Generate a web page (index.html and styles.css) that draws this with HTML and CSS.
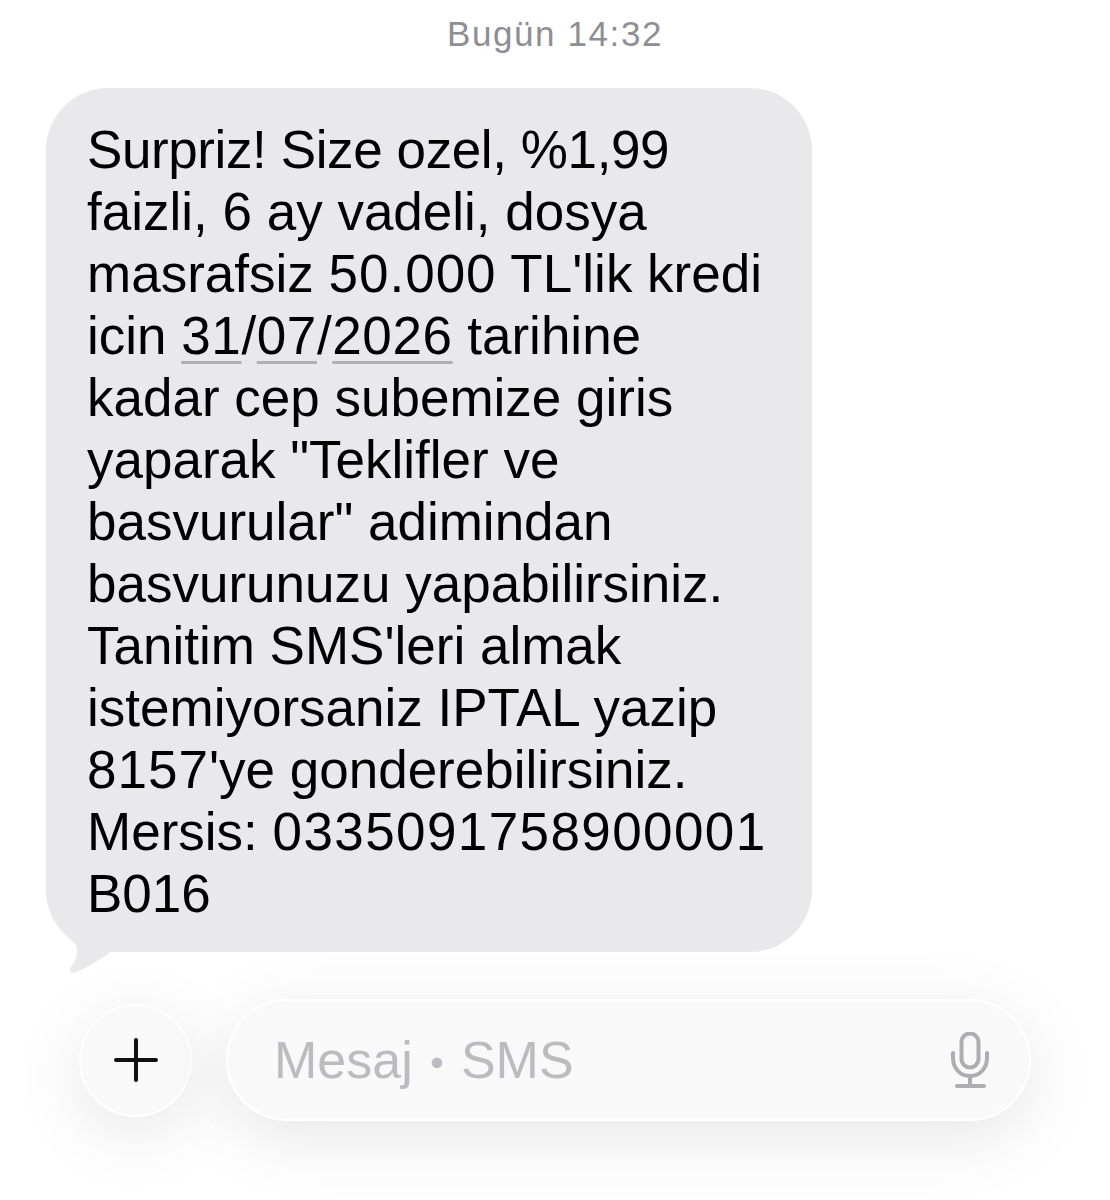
FILE: index.html
```html
<!DOCTYPE html>
<html lang="tr">
<head>
<meta charset="utf-8">
<title>Mesaj</title>
<link rel="stylesheet" href="styles.css">
</head>
<body>
<main class="screen">
  <div class="stamp">Bugün 14:32</div>
  <div class="bubble">
    <p class="text"><span class="tight">Surpriz! Size ozel, %1,99</span><br>faizli, 6 ay vadeli, dosya<br>masrafsiz <span class="num">50.000</span> TL'lik kredi<br>icin <span class="date"><span class="dl">31</span>/<span class="dl">07</span>/<span class="dl">2026</span></span> tarihine<br>kadar cep subemize giris<br>yaparak "Teklifler ve<br>basvurular" adimindan<br>basvurunuzu yapabilirsiniz.<br>Tanitim SMS'leri almak<br>istemiyorsaniz IPTAL yazip<br><span class="num">8157</span>'ye gonderebilirsiniz.<br>Mersis: <span class="code">0335091758900001</span><br>B016</p>
    <svg class="tail" viewBox="0 0 50 46" aria-hidden="true"><path d="M0 0C4 5 9 10 13 14C17 19 16 28 9 37C6 41 9 44 14 42C26 37 36 31 46 24L50 20L50 0Z"/></svg>
  </div>
  <div class="composer">
    <div class="plus">
      <svg viewBox="0 0 44 44" width="44" height="44" aria-hidden="true"><path d="M22 2V42M2 22H42"/></svg>
    </div>
    <div class="field">
      <span class="placeholder">Mesaj <span class="dot">•</span> SMS</span>
      <svg class="mic" viewBox="0 0 38 56" width="38" height="56" aria-hidden="true">
        <rect x="10.500" y="1.500" width="17" height="34" rx="8.500"/>
        <path d="M2 21V26C2 36 9 44 19 44C29 44 36 36 36 26V21M19 44V53M6 54H33"/>
      </svg>
    </div>
  </div>
</main>
</body>
</html>
```
FILE: styles.css
```css
* { box-sizing: border-box; }
html, body { margin: 0; background: #fff; }
.screen {
  width: 1110px;
  height: 1200px;
  overflow: hidden;
  display: flex;
  flex-direction: column;
  font-family: "Liberation Sans", Arial, sans-serif;
}
.stamp {
  height: 88px;
  padding-top: 14px;
  text-align: center;
  font-size: 35px;
  line-height: 40px;
  letter-spacing: 1.6px;
  color: #8e8e93;
}
.bubble {
  position: relative;
  width: 766px;
  height: 864px;
  margin-left: 46px;
  padding: 31px 0 0 41px;
  background: #e9e9eb;
  border-radius: 62px;
}
.text {
  margin: 0;
  font-size: 53px;
  line-height: 62px;
  color: #000;
  white-space: nowrap;
  font-variant-ligatures: none;
}
.tight { letter-spacing: -0.4px; }
.num { letter-spacing: 1px; }
.date { letter-spacing: 0.6px; }
.code { letter-spacing: 1.4px; }
.dl {
  text-decoration: underline;
  text-decoration-color: #b0b0b2;
  text-decoration-thickness: 3px;
  text-underline-offset: 7px;
}
.tail {
  position: absolute;
  left: 16px;
  bottom: -24px;
  width: 50px;
  height: 46px;
  fill: #e9e9eb;
}
.composer {
  display: flex;
  align-items: center;
  gap: 34px;
  margin: 47px 0 0 79px;
  width: 952px;
}
.plus {
  flex: none;
  width: 113px;
  height: 113px;
  display: flex;
  align-items: center;
  justify-content: center;
  border-radius: 50%;
  background: #f9f9fa;
  border: 2px solid #fff;
  box-shadow: 0 16px 70px rgba(0, 0, 0, .1);
}
.plus svg { fill: none; stroke: #111; stroke-width: 4px; stroke-linecap: round; }
.field {
  flex: 1;
  height: 122px;
  display: flex;
  align-items: center;
  justify-content: space-between;
  padding: 0 40px 0 46px;
  border-radius: 61px;
  background: #f9f9fa;
  border: 2px solid #fff;
  box-shadow: 0 16px 70px rgba(0, 0, 0, .1);
}
.placeholder { font-size: 52px; color: #bcbcc0; }
.dot { font-size: 38px; margin: 0 3px; vertical-align: 2px; }
.mic { fill: none; stroke: #aeaeb2; stroke-width: 4px; stroke-linecap: round; }
```
